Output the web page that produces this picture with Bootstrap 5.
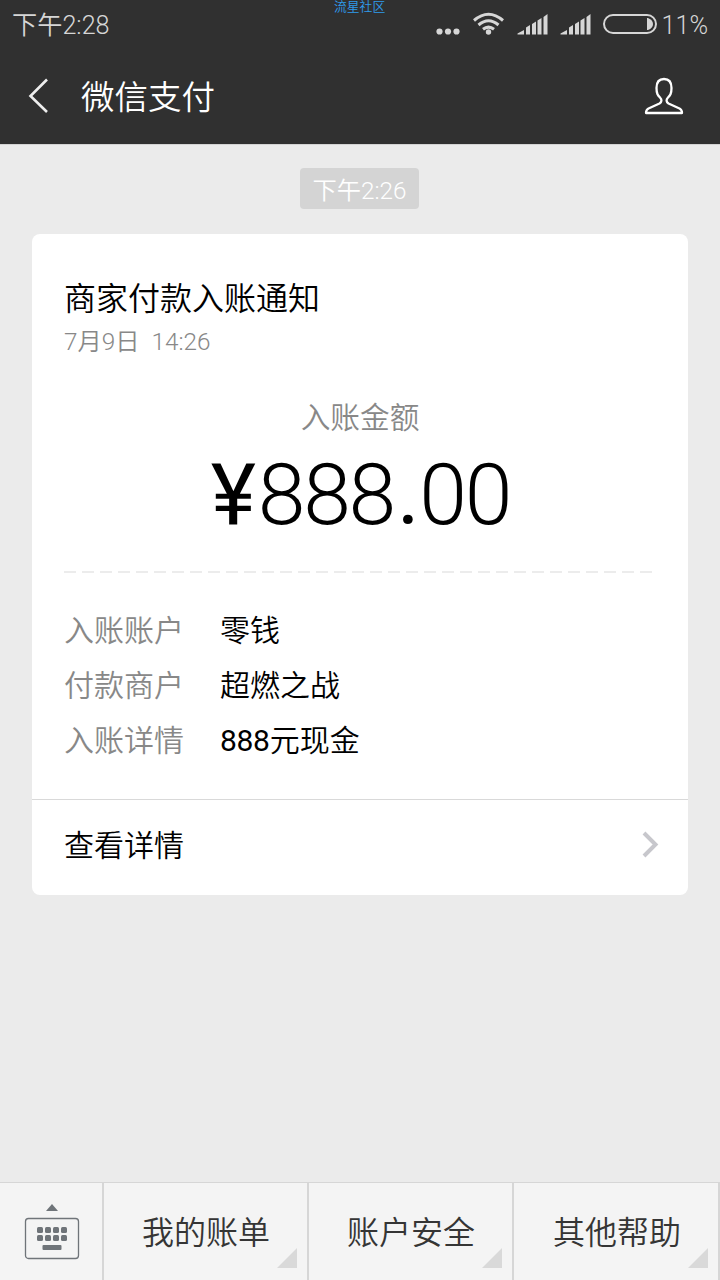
<!DOCTYPE html>
<html lang="zh-CN">
<head>
<meta charset="utf-8">
<meta name="viewport" content="width=device-width, initial-scale=1">
<title>微信支付</title>
<link href="https://cdn.jsdelivr.net/npm/bootstrap@5.3.0/dist/css/bootstrap.min.css" rel="stylesheet">
<style>
  body { font-family: Roboto, "Noto Sans CJK SC", sans-serif; font-weight: 350; background: #ebebeb; color: #000; height: 1280px; overflow: hidden; }
  svg { display: block; flex: none; }
  .top-area { background: #303030; height: 144px; }
  .status-line { height: 50px; color: #d6d6d6; font-size: 25.2px; line-height: 52px; padding: 0 12px 0 12px; }
  .site-tag { left: 334px; top: 0; font-size: 12.8px; line-height: 14px; color: #2f9bec; }
  .title-line { height: 92px; padding: 0 36px 0 28px; }
  .title-line h1 { font-size: 33.5px; line-height: 92px; font-weight: 350; color: #fff; margin-left: 32px; padding-top: 3px; }
  .chat-area { border-top: 1px solid #d3d3d3; padding: 23px 32px 0; }
  .time-chip { width: 119px; height: 41px; line-height: 45px; font-size: 24.3px; background: #d4d4d4; color: #fff; border-radius: 4px; margin: 0 0 25px 268px; }
  .pay-card { --bs-card-border-radius: 8px; --bs-card-border-width: 0; height: 661px; color: #000; }
  .pay-body { height: 565px; padding: 42px 32px 0; }
  .pay-title { font-size: 32px; line-height: 46px; font-weight: 350; }
  .pay-date { font-size: 24.3px; line-height: 40px; word-spacing: 6px; }
  .muted-ink { color: #888; }
  .pay-label { font-size: 29.7px; line-height: 44px; margin-top: 34px; }
  .pay-sum { font-size: 86px; line-height: 110px; height: 110px; white-space: nowrap; letter-spacing: -2.3px; font-weight: 300; padding-left: 1px; }
  .yen { font-weight: 400; margin-right: 4px; }
  .dot { font-weight: 400; margin: 0 2px 0 3px; }
  .num { font-weight: 400; letter-spacing: -.3px; }
  .dash-rule { height: 2px; width: 588px; margin-top: 21px; background: repeating-linear-gradient(90deg, #ececec 0 12px, transparent 12px 18px); }
  .pay-rows { margin-top: 30px; font-size: 30px; line-height: 55px; }
  .pay-rows dt { width: 156px; font-weight: 350; }
  .pay-foot { border-top: 1px solid #d9d9d9; height: 96px; padding: 0 29px 0 32px; font-size: 30px; line-height: 91px; }
  .menu-bar { height: 98px; background: #f4f4f4; border-top: 1px solid #d6d6d6; color: #353535; font-size: 32px; }
  .menu-bar > div { border-right: 2px solid #d6d6d6; }
  .key-cell { width: 104px; padding: 21px 0 0 24px; }
  .menu-cell { width: 205px; line-height: 100px; padding-left: 1px; }
  .menu-cell::after { content: ""; position: absolute; right: 10px; bottom: 12px; border-left: 20px solid transparent; border-bottom: 20px solid #d9d9d9; }
  .menu-cell:last-child { width: 206px; padding-left: 2px; }
</style>
</head>
<body class="d-flex flex-column">
<header class="top-area flex-shrink-0 position-relative">
  <div class="site-tag position-absolute">流星社区</div>
  <div class="status-line d-flex justify-content-between">
    <span>下午2:28</span>
    <div class="d-flex">
      <svg width="230" height="50" viewBox="430 0 230 50" fill="#d6d6d6">
        <circle cx="439.5" cy="31.5" r="3.1"/><circle cx="448" cy="31.5" r="3.1"/><circle cx="456.5" cy="31.5" r="3.1"/>
        <g fill="none" stroke="#d6d6d6" stroke-width="3">
          <path d="M474 20.500Q488.500 8 503 20.500"/><path d="M478.500 25Q488.500 16.500 498.500 25"/><path d="M483 29.300Q488.500 25 494 29.300"/>
        </g>
        <circle cx="488.500" cy="32" r="2.700"/>
        <g id="bars"><path d="M517.500 34.500v-1l6.500-3.500v4.500zM526 27.500l4-2.500v9.500h-4zM532 24l4-2.500v13h-4zM537.500 20.500l4-2.500v16.500h-4zM543.500 17l4-3v20.500h-4z"/></g>
        <use href="#bars" x="43"/>
        <rect x="604" y="15" width="52" height="18" rx="9" fill="none" stroke="#d6d6d6" stroke-width="2"/>
        <path d="M647 18h1q5 2 5 6t-5 6h-1z"/>
      </svg>
      <span class="text-end" style="width:48px">11%</span>
    </div>
  </div>
  <div class="title-line d-flex align-items-center">
    <svg width="21" height="36" viewBox="0 0 21 36" fill="none" stroke="#eee" stroke-width="2.600"><path d="M19 1.500L2.500 18L19 34"/></svg>
    <h1 class="mb-0">微信支付</h1>
    <svg class="ms-auto" width="40" height="38" viewBox="0 0 40 38" fill="none" stroke="#fff" stroke-width="2.300" stroke-linejoin="round"><path d="M20 2C14.500 2 12.500 5 12.500 11C12.500 17 14 18.500 16 20.500C18 22.500 18 25 15.500 26.500L4.500 31.500C2.500 32.500 2 34 2 36H38C38 34 37.500 32.500 35.500 31.500L24.500 26.500C22 25 22 22.500 24 20.500C26 18.500 27.500 17 27.500 11C27.500 5 25.500 2 20 2Z"/></svg>
  </div>
</header>
<main class="chat-area flex-grow-1">
  <div class="time-chip text-center">下午2:26</div>
  <section class="card pay-card">
    <div class="pay-body">
      <h2 class="pay-title mb-0">商家付款入账通知</h2>
      <div class="pay-date muted-ink">7月9日 14:26</div>
      <div class="pay-label muted-ink text-center">入账金额</div>
      <div class="pay-sum text-center"><span class="yen">¥</span>888<span class="dot">.</span>00</div>
      <div class="dash-rule"></div>
      <dl class="pay-rows mb-0">
        <div class="d-flex"><dt class="muted-ink">入账账户</dt><dd class="mb-0">零钱</dd></div>
        <div class="d-flex"><dt class="muted-ink">付款商户</dt><dd class="mb-0">超燃之战</dd></div>
        <div class="d-flex"><dt class="muted-ink">入账详情</dt><dd class="mb-0"><span class="num">888</span>元现金</dd></div>
      </dl>
    </div>
    <div class="pay-foot d-flex justify-content-between">
      <span>查看详情</span>
      <svg width="18" height="88" viewBox="0 0 18 88" fill="none" stroke="#c7c7cc" stroke-width="4"><path d="M3 33L14.500 44.500L3 56"/></svg>
    </div>
  </section>
</main>
<nav class="menu-bar d-flex flex-shrink-0">
  <div class="key-cell">
    <svg width="56" height="56" viewBox="0 0 56 56" fill="#6f7479">
      <path d="M22 7L28 0L34 7z"/>
      <rect x="1.500" y="14.500" width="53" height="40" rx="3" fill="none" stroke="#6f7479" stroke-width="1.300"/>
      <g id="keys"><rect x="13" y="23" width="6" height="6" rx="1.500"/><rect x="21" y="23" width="6" height="6" rx="1.500"/><rect x="29" y="23" width="6" height="6" rx="1.500"/><rect x="37" y="23" width="6" height="6" rx="1.500"/></g>
      <use href="#keys" y="8"/>
      <rect x="18.500" y="41" width="19" height="5" rx="1"/>
    </svg>
  </div>
  <div class="menu-cell position-relative text-center">我的账单</div>
  <div class="menu-cell position-relative text-center">账户安全</div>
  <div class="menu-cell position-relative text-center">其他帮助</div>
</nav>
<script src="https://cdn.jsdelivr.net/npm/bootstrap@5.3.0/dist/js/bootstrap.bundle.min.js"></script>
</body>
</html>
